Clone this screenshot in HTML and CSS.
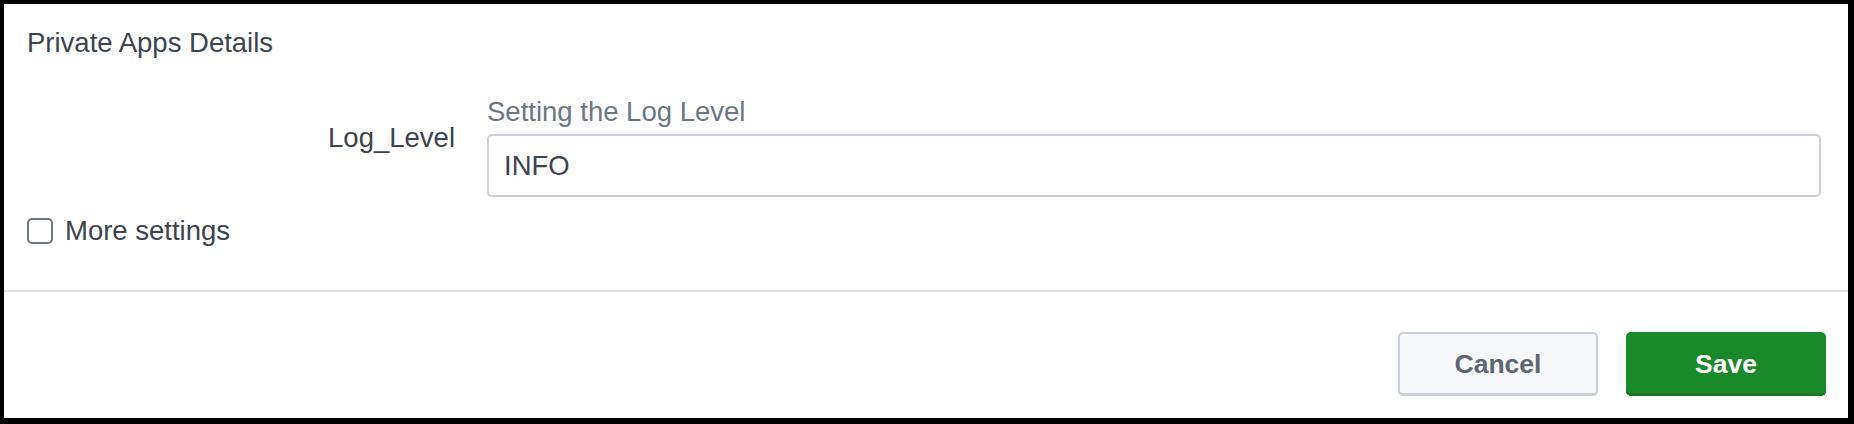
FILE: index.html
```html
<!DOCTYPE html>
<html lang="en">
<head>
<meta charset="utf-8">
<title>Private Apps Details</title>
<link rel="stylesheet" href="styles.css">
</head>
<body>
<div class="panel">
  <div class="content">
    <h2 class="title">Private Apps Details</h2>
    <div class="field">
      <label class="field-label" for="log-level">Log_Level</label>
      <div class="field-control">
        <div class="help">Setting the Log Level</div>
        <input class="text-input" id="log-level" type="text" value="INFO">
      </div>
    </div>
    <label class="check-row">
      <span class="checkbox"></span>
      <span class="check-label">More settings</span>
    </label>
  </div>
  <div class="footer">
    <button class="btn btn-secondary" type="button">Cancel</button>
    <button class="btn btn-primary" type="button">Save</button>
  </div>
</div>
</body>
</html>
```

FILE: styles.css
```css
html, body {
  margin: 0;
  padding: 0;
}

body {
  background: #000;
  width: 1854px;
  height: 424px;
  box-sizing: border-box;
  padding: 4px 6px 6px 4px;
  font-family: "Liberation Sans", Arial, sans-serif;
  font-size: 27.5px;
  line-height: 32px;
  color: #3c444d;
}

.panel {
  background: #fff;
  height: 414px;
  display: flex;
  flex-direction: column;
}

.content {
  padding: 23px 27px 0 23px;
  height: 288px;
  flex: none;
  box-sizing: border-box;
  border-bottom: 2px solid #e1e6eb;
}

.title {
  margin: 0;
  font-size: 27.5px;
  font-weight: normal;
  line-height: 32px;
}

.field {
  display: grid;
  grid-template-columns: 428px 1fr;
  column-gap: 32px;
  margin-top: 37px;
}

.field-label {
  text-align: right;
  margin-top: 26px;
}

.field-control {
  display: flex;
  flex-direction: column;
  gap: 6px;
}

.help {
  color: #6b7785;
}

.text-input {
  box-sizing: border-box;
  height: 63px;
  width: 100%;
  margin: 0;
  border: 2px solid #c9d0d8;
  border-radius: 5px;
  padding: 0 15px;
  font-family: inherit;
  font-size: 27.5px;
  line-height: 32px;
  color: #3c444d;
  background: #fff;
  outline: none;
}

.check-row {
  display: flex;
  align-items: center;
  gap: 12px;
  margin-top: 18px;
}

.checkbox {
  box-sizing: border-box;
  width: 26px;
  height: 26px;
  border: 2px solid #6b7785;
  border-radius: 5px;
  background: #fff;
}

.footer {
  display: flex;
  justify-content: flex-end;
  gap: 28px;
  padding: 40px 22px 0 0;
}

.btn {
  box-sizing: border-box;
  width: 200px;
  height: 64px;
  margin: 0;
  border-radius: 5px;
  font-family: inherit;
  font-size: 26.5px;
  font-weight: bold;
  line-height: 30px;
  padding: 0;
  cursor: pointer;
}

.btn-secondary {
  background: #f7f8fa;
  color: #5c6773;
  border: 2px solid #c9d0d8;
  border-bottom-width: 3px;
}

.btn-primary {
  background: #1a8929;
  color: #fff;
  border: none;
  box-shadow: inset 0 -3px 0 #167a24;
}
```
